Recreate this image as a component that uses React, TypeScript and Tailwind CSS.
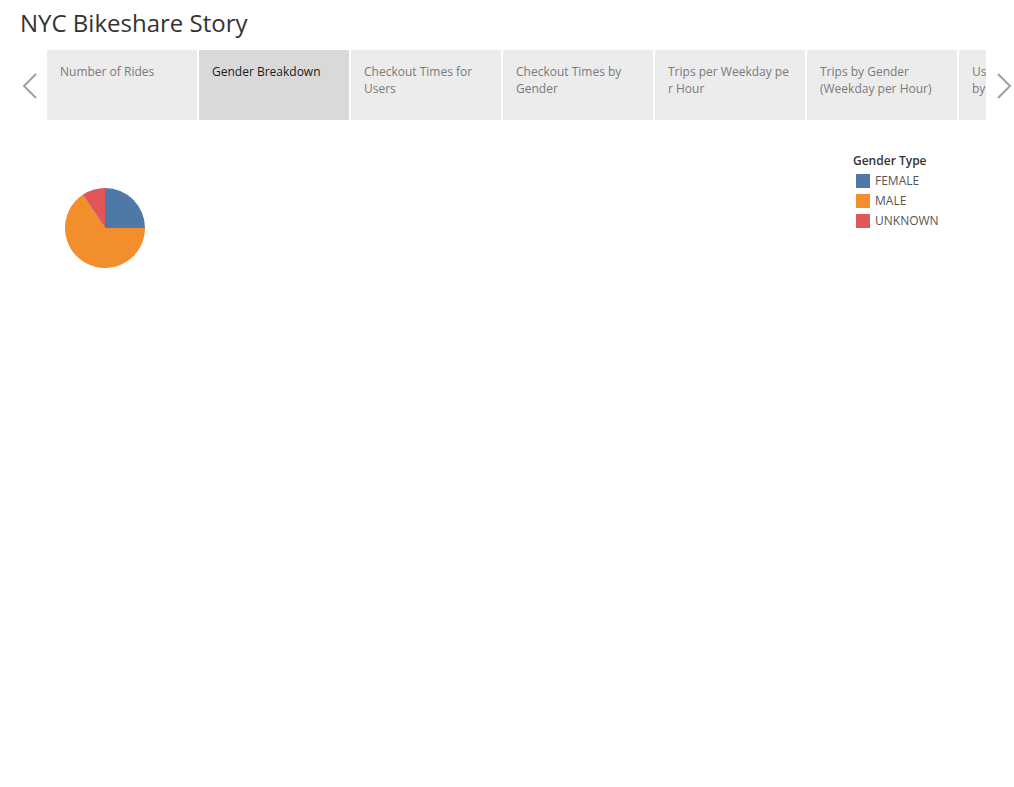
import React from "react";

const tabs: string[][] = [
  ["Number of Rides"],
  ["Gender Breakdown"],
  ["Checkout Times for", "Users"],
  ["Checkout Times by", "Gender"],
  ["Trips per Weekday pe", "r Hour"],
  ["Trips by Gender", "(Weekday per Hour)"],
  ["User Trip Duration", "by Gender"],
];

function Pie() {
  const cx = 40, cy = 40, r = 40;
  const pt = (frac: number) => {
    const a = frac * 2 * Math.PI;
    return [cx + r * Math.sin(a), cy - r * Math.cos(a)];
  };
  const arc = (s: number, e: number) => {
    const [x1, y1] = pt(s);
    const [x2, y2] = pt(e);
    const large = e - s > 0.5 ? 1 : 0;
    return `M${cx},${cy} L${x1},${y1} A${r},${r} 0 ${large} 1 ${x2},${y2} Z`;
  };
  return (
    <svg width="80" height="80" viewBox="0 0 80 80">
      <path d={arc(0, 0.25)} fill="#4e79a7" />
      <path d={arc(0.25, 0.906)} fill="#f28e2b" />
      <path d={arc(0.906, 1)} fill="#e15759" />
    </svg>
  );
}

export default function App() {
  return (
    <div
      className="w-[1014px] h-[787px] bg-white relative overflow-hidden"
      style={{ fontFamily: '"Open Sans", "Noto Sans", sans-serif' }}
    >
      <h1 className="pl-[20px] pt-[7px] h-[50px] text-[24px] leading-[32px] text-[#333333]">
        NYC Bikeshare Story
      </h1>
      <div className="flex items-center h-[70px]">
        <div className="w-[47px] pl-[22px] pt-[1px]">
          <svg width="16" height="26" viewBox="0 0 16 26" className="block">
            <path d="M14 1 L2 13 L14 25" fill="none" stroke="#a0a0a0" strokeWidth="2" />
          </svg>
        </div>
        <div className="w-[939px] h-[70px] overflow-hidden flex gap-[2px]">
          {tabs.map((t, i) => (
            <div
              key={i}
              className={`shrink-0 w-[150px] h-[70px] pl-[13px] pt-[13px] text-[12px] leading-[17px] overflow-hidden ${
                i === 1 ? "bg-[#d9d9d9] text-[#1a1a1a]" : "bg-[#ececec] text-[#7a7a7a]"
              }`}
            >
              {t.map((line, j) => (
                <div key={j} className="whitespace-nowrap">
                  {line}
                </div>
              ))}
            </div>
          ))}
        </div>
        <div className="flex-1 pl-[10px] pt-[1px]">
          <svg width="16" height="26" viewBox="0 0 16 26" className="block">
            <path d="M2 1 L14 13 L2 25" fill="none" stroke="#a0a0a0" strokeWidth="2" />
          </svg>
        </div>
      </div>
      <div className="flex">
        <div className="pl-[65px] pt-[68px] w-[853px]">
          <Pie />
        </div>
        <div className="pt-[33px]">
          <div className="text-[12px] leading-[16px] font-semibold text-[#333333]">Gender Type</div>
          <div className="pl-[3px] pt-[5px] flex flex-col gap-[6px]">
            {[
              ["#4e79a7", "FEMALE"],
              ["#f28e2b", "MALE"],
              ["#e15759", "UNKNOWN"],
            ].map(([c, l]) => (
              <div key={l} className="flex items-center h-[14px]">
                <div className="w-[14px] h-[14px]" style={{ background: c }} />
                <span className="ml-[5px] text-[12px] text-[#555555]">{l}</span>
              </div>
            ))}
          </div>
        </div>
      </div>
    </div>
  );
}
